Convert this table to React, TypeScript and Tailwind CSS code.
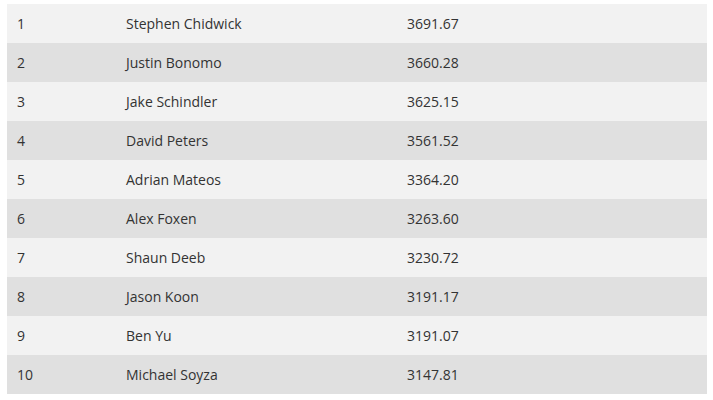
const rows: [string, string, string][] = [
  ["1", "Stephen Chidwick", "3691.67"],
  ["2", "Justin Bonomo", "3660.28"],
  ["3", "Jake Schindler", "3625.15"],
  ["4", "David Peters", "3561.52"],
  ["5", "Adrian Mateos", "3364.20"],
  ["6", "Alex Foxen", "3263.60"],
  ["7", "Shaun Deeb", "3230.72"],
  ["8", "Jason Koon", "3191.17"],
  ["9", "Ben Yu", "3191.07"],
  ["10", "Michael Soyza", "3147.81"],
];

export default function App() {
  return (
    <div className="w-[713px] h-[400px] bg-white pt-[4px] pl-[7px]" style={{ fontFamily: '"Open Sans", sans-serif' }}>
      <div className="w-[700px] flex flex-col">
        {rows.map((r, i) => (
          <div
            key={r[0]}
            className={`grid grid-cols-[109px_281px_310px] h-[39px] items-center text-[14px] text-[#333333] ${i % 2 === 0 ? "bg-[#f2f2f2]" : "bg-[#e0e0e0]"}`}
          >
            <div className="pl-[10px]">{r[0]}</div>
            <div className="pl-[10px]">{r[1]}</div>
            <div className="pl-[10px]">{r[2]}</div>
          </div>
        ))}
      </div>
    </div>
  );
}
